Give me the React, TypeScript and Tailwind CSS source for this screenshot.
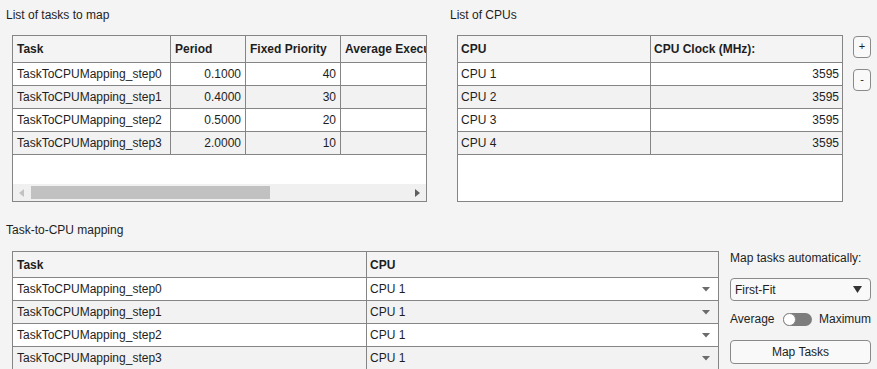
import React from "react";

const tasks = [
  ["TaskToCPUMapping_step0", "0.1000", "40"],
  ["TaskToCPUMapping_step1", "0.4000", "30"],
  ["TaskToCPUMapping_step2", "0.5000", "20"],
  ["TaskToCPUMapping_step3", "2.0000", "10"],
];

const cpus = ["CPU 1", "CPU 2", "CPU 3", "CPU 4"];

function CellArrow() {
  return (
    <svg width="8" height="5" viewBox="0 0 8 5" className="shrink-0">
      <path d="M0 0 L8 0 L4 4.5 Z" fill="#6b6b6b" />
    </svg>
  );
}

export default function App() {
  return (
    <div
      className="w-[877px] h-[369px] overflow-hidden bg-[#f4f4f4] text-[12px] text-[#1e1e1e] flex flex-col"
      style={{ fontFamily: '"Liberation Sans", Arial, sans-serif' }}
    >
      {/* Top section */}
      <div className="flex h-[210px] shrink-0">
        {/* Tasks list */}
        <div className="w-[450px] shrink-0 flex flex-col">
          <div className="pl-[6px] pt-[8px] leading-[14px] h-[22px]">List of tasks to map</div>
          <div className="ml-[12px] mt-[13px] w-[415px] h-[167px] border border-[#858585] bg-white flex flex-col overflow-hidden">
            <div className="flex h-[27px] shrink-0 bg-[#f4f4f4] border-b border-[#858585] font-bold">
              <div className="w-[158px] shrink-0 border-r border-[#858585] pl-[4px] flex items-center">Task</div>
              <div className="w-[75px] shrink-0 border-r border-[#858585] pl-[4px] flex items-center">Period</div>
              <div className="w-[95px] shrink-0 border-r border-[#858585] pl-[4px] flex items-center">Fixed Priority</div>
              <div className="flex-1 min-w-0 pl-[4px] flex items-center whitespace-nowrap overflow-hidden">Average Execu</div>
            </div>
            {tasks.map((t, i) => (
              <div
                key={i}
                className={`flex h-[23px] shrink-0 border-b border-[#858585] ${i % 2 === 1 ? "bg-[#f2f2f2]" : "bg-white"}`}
              >
                <div className="w-[158px] shrink-0 border-r border-[#858585] pl-[4px] flex items-center">{t[0]}</div>
                <div className="w-[75px] shrink-0 border-r border-[#858585] pr-[4px] flex items-center justify-end">{t[1]}</div>
                <div className="w-[95px] shrink-0 border-r border-[#858585] pr-[4px] flex items-center justify-end">{t[2]}</div>
                <div className="flex-1" />
              </div>
            ))}
            <div className="flex-1" />
            <div className="h-[17px] shrink-0 bg-[#f0f0f0] flex items-center relative">
              <div className="w-[17px] flex items-center justify-center">
                <svg width="5" height="8" viewBox="0 0 5 8">
                  <path d="M5 0 L5 8 L0 4 Z" fill="#c2c2c2" />
                </svg>
              </div>
              <div className="w-[239px] h-[13px] bg-[#c1c1c1] ml-[1px]" />
              <div className="flex-1" />
              <div className="w-[17px] flex items-center justify-center">
                <svg width="5" height="8" viewBox="0 0 5 8">
                  <path d="M0 0 L0 8 L5 4 Z" fill="#5f5f5f" />
                </svg>
              </div>
            </div>
          </div>
        </div>

        {/* CPU list */}
        <div className="flex flex-col">
          <div className="pl-0 pt-[8px] leading-[14px] h-[22px]">List of CPUs</div>
          <div className="flex">
            <div className="ml-[7px] mt-[13px] w-[386px] h-[167px] border border-[#858585] bg-white flex flex-col overflow-hidden">
              <div className="flex h-[27px] shrink-0 bg-[#f4f4f4] border-b border-[#858585] font-bold">
                <div className="w-[193px] shrink-0 border-r border-[#858585] pl-[3px] flex items-center">CPU</div>
                <div className="flex-1 pl-[3px] flex items-center">CPU Clock (MHz):</div>
              </div>
              {cpus.map((c, i) => (
                <div
                  key={i}
                  className={`flex h-[23px] shrink-0 border-b border-[#858585] ${i % 2 === 1 ? "bg-[#f2f2f2]" : "bg-white"}`}
                >
                  <div className="w-[193px] shrink-0 border-r border-[#858585] pl-[3px] flex items-center">{c}</div>
                  <div className="flex-1 pr-[3px] flex items-center justify-end">3595</div>
                </div>
              ))}
            </div>
            <div className="ml-[10px] mt-[14px] flex flex-col gap-[11px]">
              <button className="w-[18px] h-[22px] rounded-[4px] border border-[#8a8a8a] bg-[#f9f9f9] flex items-center justify-center text-[11px] leading-none pb-[2px]">
                +
              </button>
              <button className="w-[18px] h-[22px] rounded-[4px] border border-[#8a8a8a] bg-[#f9f9f9] flex items-center justify-center text-[11px] leading-none pb-[2px]">
                -
              </button>
            </div>
          </div>
        </div>
      </div>

      {/* Bottom section */}
      <div className="pl-[6px] pt-[13px] leading-[14px] h-[27px] shrink-0">Task-to-CPU mapping</div>
      <div className="flex mt-[14px]">
        <div className="ml-[12px] w-[707px] border-l border-t border-r border-[#858585] bg-white flex flex-col shrink-0">
          <div className="flex h-[26px] shrink-0 bg-[#f4f4f4] border-b border-[#858585] font-bold">
            <div className="w-[354px] shrink-0 border-r border-[#858585] pl-[4px] flex items-center">Task</div>
            <div className="flex-1 pl-[3px] flex items-center">CPU</div>
          </div>
          {tasks.map((t, i) => (
            <div
              key={i}
              className={`flex h-[23px] shrink-0 border-b border-[#858585] ${i % 2 === 1 ? "bg-[#f2f2f2]" : "bg-white"}`}
            >
              <div className="w-[354px] shrink-0 border-r border-[#858585] pl-[4px] flex items-center">{t[0]}</div>
              <div className="flex-1 pl-[3px] pr-[8px] flex items-center justify-between">
                <span>CPU 1</span>
                <CellArrow />
              </div>
            </div>
          ))}
        </div>
        <div className="ml-[11px] w-[141px] flex flex-col">
          <div className="leading-[14px] whitespace-nowrap">Map tasks automatically:</div>
          <div className="mt-[13px] h-[23px] rounded-[4px] border border-[#8a8a8a] bg-[#f9f9f9] flex items-center justify-between pl-[4px] pr-[8px]">
            <span>First-Fit</span>
            <svg width="9" height="7" viewBox="0 0 9 7">
              <path d="M0 0 L9 0 L4.5 7 Z" fill="#333333" />
            </svg>
          </div>
          <div className="mt-[11px] h-[14px] flex items-center">
            <span>Average</span>
            <div className="ml-[9px] w-[29px] h-[13px] rounded-full bg-[#7d7d7d] relative">
              <div className="absolute left-0 top-0 w-[13px] h-[13px] rounded-full bg-white border border-[#8a8a8a]" />
            </div>
            <span className="ml-[7px]">Maximum</span>
          </div>
          <button className="mt-[14px] h-[24px] rounded-[4px] border border-[#8a8a8a] bg-[#f9f9f9] flex items-center justify-center text-[12px]">
            Map Tasks
          </button>
        </div>
      </div>
    </div>
  );
}
